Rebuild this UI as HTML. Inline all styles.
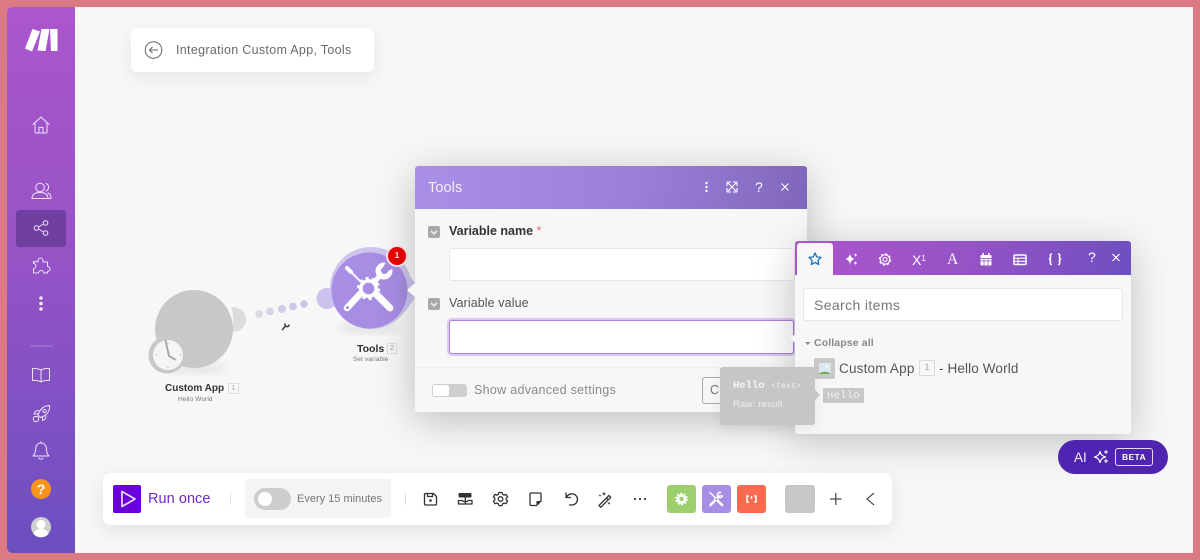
<!DOCTYPE html>
<html><head><meta charset="utf-8"><style>
html,body{margin:0;padding:0}
body{width:1200px;height:560px;overflow:hidden;background:#dc7a84;position:relative;font-family:"Liberation Sans",sans-serif}
.a,.t{position:absolute}
.t{white-space:nowrap}
svg{position:absolute;overflow:visible}
.i{fill:none;stroke:#efe2f8;stroke-width:1;stroke-linecap:round;stroke-linejoin:round}
.b{fill:none;stroke:#333;stroke-width:1.3;stroke-linecap:round;stroke-linejoin:round}
.w{fill:none;stroke:#fff;stroke-width:1.4;stroke-linecap:round;stroke-linejoin:round}
</style></head><body>
<div class="a" style="left:7px;top:7px;width:1186px;height:546px;background:#f7f7f7;border-radius:5px 0 0 5px;overflow:hidden">
<div class="a" style="left:0;top:0;width:68px;height:546px;background:linear-gradient(180deg,#ab56cc 0%,#9653c6 45%,#6c4fc0 100%)"></div>
</div>
<svg style="left:0;top:0" width="1200" height="560">
<g fill="#fff"><polygon points="32.500,29 40,31.500 32,51.500 25,48.500"/><polygon points="41.500,29 49.500,29 45.500,51 37.500,50.500"/><polygon points="50,29 57.500,29 57.500,51 51,51"/></g>
<path class="i" d="M33 124.500l8-7.500 8 7.500M35 122.500v9.500a1 1 0 0 0 1 1h10a1 1 0 0 0 1-1v-9.500M39 133v-5.500h4v5.500"/>
<circle class="i" cx="40" cy="187.500" r="4.300"/><path class="i" d="M32 198.500c0-4 3-6 8-6s8 2 8 6zM46 183.500a4 4 0 0 1 0 7.500M48 193c2 .8 3.200 2.800 3 5.500h-3"/>
<rect x="16" y="210" width="50" height="37" rx="3.500" fill="#6f3f9f"/>
<circle class="i" cx="36.500" cy="228" r="2.300"/><circle class="i" cx="45.500" cy="223" r="2.300"/><circle class="i" cx="45.500" cy="233" r="2.300"/><path class="i" d="M38.500 227l5-3M38.500 229l5 3"/>
<path class="i" d="M38 262v-1.500a2.500 2.500 0 0 1 5 0v1.500h4.500v4.500a2.500 2.500 0 0 1 0 5v1.500h-4a2.500 2.500 0 0 0-5 0h-5v-4.500a2.500 2.500 0 0 0 0-5v-2z"/>
<g fill="#f3e6fb"><circle cx="41" cy="298" r="1.800"/><circle cx="41" cy="303.500" r="1.800"/><circle cx="41" cy="309" r="1.800"/></g>
<rect x="30" y="345.500" width="23" height="1" fill="#a97fd6"/>
<path class="i" d="M41 370c-3-1.500-6-1.800-8.500-1.500v12c3-.3 6 0 8.500 1.500 2.500-1.500 5.500-1.800 8.500-1.500v-12c-2.500-.3-5.500 0-8.500 1.500zM41 370v12"/>
<path class="i" d="M49.500 405.500c-5 0-9.500 3-11.500 9.500l2.500 2.500c6.500-2 9.500-6.500 9-12zM38.500 410.500c-2.500 0-4 1.500-4.500 3.500h3.500M42.500 417v3.500c2 -.5 3.500-2 3.500-4.500"/><circle class="i" cx="44.500" cy="411" r="1.600"/><rect class="i" x="33.500" y="416.500" width="5" height="5" rx="1.800"/>
<path class="i" d="M41 443c-3.500 0-5.500 3-5.500 6.500 0 3-1 5-2.500 6.500h16c-1.500-1.500-2.500-3.500-2.500-6.500 0-3.500-2-6.500-5.500-6.500zM39 458c.5 1.500 3.500 1.500 4 0M41 441.500v1.500"/>
<circle cx="41" cy="489" r="10" fill="#f7941d"/>
<circle cx="41" cy="527" r="10" fill="#d0d0d0"/><circle cx="41" cy="524.500" r="4.500" fill="#fff"/><path d="M33.500 534c1-3.500 4-5 7.500-5s6.500 1.500 7.500 5a10 10 0 0 1-15 0z" fill="#fff"/>
</svg>
<div class="t" style="left:34px;top:480px;width:14px;text-align:center;font:bold 14px/18px 'Liberation Sans',sans-serif;color:#fff">?</div>

<!-- breadcrumb -->
<div class="a" style="left:131px;top:28px;width:243px;height:44px;background:#fff;border-radius:6px;box-shadow:0 6px 18px rgba(0,0,0,.07)"></div>
<svg style="left:0;top:0" width="1200" height="560"><circle cx="153.500" cy="50" r="8.300" fill="none" stroke="#666" stroke-width="1"/><path d="M158 50h-8.500M152.500 47l-3 3 3 3" fill="none" stroke="#666" stroke-width="1"/></svg>
<div class="t" style="left:176px;top:42px;font-size:12.500px;line-height:16px;color:#6a6a6a;letter-spacing:.31px">Integration Custom App, Tools</div>

<!-- nodes -->
<svg style="left:0;top:0" width="1200" height="560">
<defs><filter id="bl"><feGaussianBlur stdDeviation="5"/></filter></defs>
<ellipse cx="198" cy="368" rx="30" ry="6" fill="#000" opacity=".07" filter="url(#bl)"/>
<ellipse cx="369" cy="328" rx="32" ry="6" fill="#000" opacity=".08" filter="url(#bl)"/>
<path d="M231 307c9 0 15 5 15 12.500s-6 12.500-15 12.500c3-8 3-17 0-25z" fill="#dcdcdc"/>
<circle cx="194" cy="329" r="39" fill="#c8c8c8"/>
<circle cx="167" cy="355" r="18.500" fill="#c8c8c8"/>
<circle cx="168" cy="355" r="15" fill="#f5f5f5"/>
<path d="M165.500 340.500l3.500 15.500 6 3.500" fill="none" stroke="#a4a4a4" stroke-width="1.800" stroke-linecap="round" stroke-linejoin="round"/>
<g fill="#bbb"><circle cx="156.500" cy="355" r=".7"/><circle cx="180.500" cy="355" r=".7"/><circle cx="168" cy="367" r=".8"/><circle cx="168" cy="343" r=".7"/></g>
<circle cx="259" cy="314" r="3.700" fill="#dad8e2"/><circle cx="270" cy="311.500" r="3.900" fill="#d7d3e6"/><circle cx="282" cy="309" r="4.100" fill="#d2cce8"/><circle cx="293" cy="306.500" r="3.900" fill="#cfc7ea"/><circle cx="304" cy="304" r="3.700" fill="#ccc3ec"/>
<path d="M282 330l4-4.500M285 323.500c-.5 2 .8 3.500 3 3l1.500-1.800" fill="none" stroke="#444" stroke-width="1.600"/>
<circle cx="327" cy="298.500" r="10.500" fill="#ccc2ed"/>
<circle cx="371" cy="288" r="41" fill="#cdc3ee"/>
<polygon points="405,270 416,284 416,296 405,312" fill="#cdc3ee"/>
<circle cx="369.500" cy="290.500" r="38" fill="#a78de3"/>
<g stroke="#fff" stroke-linecap="round" fill="none">
<path d="M347 268l4 4" stroke-width="4"/>
<path d="M350 271l10 10" stroke-width="1.800"/>
<path d="M360 294l-13 14" stroke-width="6.500"/>
<path d="M377 295l13 13" stroke-width="7"/>
<path d="M374 282l7-7" stroke-width="5"/>
</g>
<circle cx="347.500" cy="307.500" r="1.500" fill="#a78de3"/>
<circle cx="384" cy="271" r="8.500" fill="#fff"/>
<circle cx="384.500" cy="270.500" r="3.500" fill="#a78de3"/>
<polygon points="382.500,268.500 386.500,272.500 396,266 388,258" fill="#a78de3"/>
<circle cx="368.500" cy="288.500" r="7.700" fill="#a78de3" stroke="#fff" stroke-width="3.600"/>
<circle cx="368.500" cy="288.500" r="10.300" fill="none" stroke="#fff" stroke-width="2.600" stroke-dasharray="3.100 3.370"/>
<circle cx="397" cy="256" r="11" fill="#f7e9ee"/><circle cx="397" cy="256" r="9" fill="#ee0000"/>
</svg>
<div class="t" style="left:397px;top:250px;width:0;display:flex;justify-content:center;font:bold 8px/12px 'Liberation Sans',sans-serif;color:#fff">1</div>
<div class="t" style="left:165px;top:382px;font:bold 10px/14px 'Liberation Sans',sans-serif;color:#333">Custom App</div>
<div class="a" style="left:228px;top:383px;width:9px;height:9px;border:1px solid #ddd;font:7px/9px 'Liberation Sans',sans-serif;color:#aaa;text-align:center">1</div>
<div class="t" style="left:178px;top:395px;font-size:6.500px;line-height:10px;color:#777;letter-spacing:.1px">Hello World</div>
<div class="t" style="left:357px;top:342px;font:bold 10.500px/14px 'Liberation Sans',sans-serif;color:#333">Tools</div>
<div class="a" style="left:387px;top:343px;width:8px;height:9px;border:1px solid #ddd;font:7px/9px 'Liberation Sans',sans-serif;color:#999;text-align:center">2</div>
<div class="t" style="left:353px;top:355px;font-size:6.500px;line-height:10px;color:#777;letter-spacing:.1px">Set variable</div>

<!-- dialog -->
<div class="a" style="left:415px;top:166px;width:392px;height:246px;background:#f7f7f7;border-radius:3px;box-shadow:0 8px 40px rgba(0,0,0,.24);overflow:hidden">
<div class="a" style="left:0;top:0;width:392px;height:43px;background:linear-gradient(100deg,#a98fe6 0%,#9a80d9 55%,#8066bb 100%)"></div>
<div class="a" style="left:0;top:201px;width:392px;height:1px;background:#efefef"></div>
</div>
<div class="t" style="left:428px;top:179px;font-size:14.500px;line-height:18px;color:#f3eefc;letter-spacing:.1px">Tools</div>
<svg style="left:0;top:0" width="1200" height="560">
<polygon points="407,290 416,282 416,298" fill="#f7f7f7"/>
<g fill="#fff"><circle cx="706.500" cy="183" r="1.200"/><circle cx="706.500" cy="187" r="1.200"/><circle cx="706.500" cy="191" r="1.200"/></g>
<path d="M727 182h4M727 182v4M737 182h-4M737 182v4M727 192h4M727 192v-4M737 192h-4M737 192v-4M728 183l8 8M736 183l-8 8" fill="none" stroke="#fff" stroke-width="1.100"/>
<path d="M781.500 183.500l7 7M788.500 183.500l-7 7" fill="none" stroke="#fff" stroke-width="1.100"/>
<rect x="428" y="226" width="12" height="12" rx="2" fill="#a9a9a9"/><path d="M431 231l3 2.800 3-2.800" fill="none" stroke="#fff" stroke-width="1.200"/>
<rect x="428" y="298" width="12" height="12" rx="2" fill="#a9a9a9"/><path d="M431 303l3 2.800 3-2.800" fill="none" stroke="#fff" stroke-width="1.200"/>
</svg>
<div class="t" style="left:755px;top:178px;font-size:14px;line-height:18px;color:#fff">?</div>
<div class="t" style="left:449px;top:224px;font:bold 12.500px/15px 'Liberation Sans',sans-serif;color:#333">Variable name<span style="color:#e56a7c;font-weight:400"> *</span></div>
<div class="a" style="left:449px;top:248px;width:344px;height:31px;background:#fff;border:1px solid #e6e6e6;border-radius:3px"></div>
<div class="t" style="left:449px;top:296px;font-size:12.500px;line-height:15px;color:#555;letter-spacing:.1px">Variable value</div>
<div class="a" style="left:449px;top:320px;width:343px;height:32px;background:#fff;border:1px solid #a985dc;border-radius:3px;box-shadow:0 0 0 2px #dcc8f0"></div>
<div class="a" style="left:432px;top:384px;width:35px;height:13px;background:#cfcfcf;border-radius:3px"></div>
<div class="a" style="left:433px;top:385px;width:16px;height:11px;background:#fff;border-radius:2px"></div>
<div class="t" style="left:474px;top:382px;font-size:12.500px;line-height:16px;color:#8a8a8a;letter-spacing:.3px">Show advanced settings</div>
<div class="a" style="left:702px;top:377px;width:40px;height:25px;border:1px solid #aaa;border-radius:3px"></div>
<div class="t" style="left:710px;top:382px;font-size:12.500px;line-height:16px;color:#777">C</div>

<!-- right panel -->
<div class="a" style="left:795px;top:241px;width:336px;height:193px;background:#f7f7f7;border-radius:3px;box-shadow:0 8px 40px rgba(0,0,0,.22);overflow:hidden">
<div class="a" style="left:0;top:0;width:336px;height:34px;background:linear-gradient(100deg,#ad55cc 0%,#9653c6 50%,#6e4fc0 100%)"></div>
<div class="a" style="left:2px;top:2px;width:36px;height:32px;background:#f7f7f7;border-radius:3px 3px 0 0"></div>
</div>
<div class="a" style="left:803px;top:288px;width:318px;height:31px;background:#fff;border:1px solid #e6e6e6;border-radius:3px"></div>
<div class="t" style="left:814px;top:296px;font-size:14px;line-height:18px;color:#777;letter-spacing:.38px">Search items</div>
<div class="t" style="left:814px;top:336px;font:bold 10.500px/14px 'Liberation Sans',sans-serif;color:#888;letter-spacing:.12px">Collapse all</div>
<div class="a" style="left:814px;top:358px;width:21px;height:21px;background:#c9c9c9;border-radius:2px"></div>
<svg style="left:0;top:0" width="1200" height="560">
<polygon points="805,342 810.500,342 807.800,345" fill="#888"/>
<rect x="819" y="363" width="12" height="11" fill="#dbe9f0"/><path d="M819 374c2-3 9-3 12 0z" fill="#6fae54"/><circle cx="827" cy="366" r="1.300" fill="#fff"/>
<path d="M815 253l1.800 3.900 4.200.5-3.100 2.900.8 4.200-3.700-2.100-3.700 2.100.8-4.200-3.100-2.900 4.200-.5z" fill="none" stroke="#1f6fb8" stroke-width="1.300" stroke-linejoin="round"/>
<path d="M850 253.500c.6 3.200 1.900 4.800 5 5.500-3.100.7-4.400 2.300-5 5.500-.6-3.200-1.900-4.800-5-5.500 3.100-.7 4.400-2.300 5-5.500zM855.500 253c.3 1.300.8 1.800 2 2-1.200.3-1.700.8-2 2-.3-1.200-.8-1.700-2-2 1.200-.2 1.700-.7 2-2zM855.500 261c.3 1.300.8 1.800 2 2-1.200.3-1.700.8-2 2-.3-1.200-.8-1.700-2-2 1.200-.2 1.700-.7 2-2z" fill="#fff"/>
<circle cx="885" cy="259.500" r="4.700" fill="none" stroke="#fff" stroke-width="1.100"/><circle cx="885" cy="259.500" r="5.500" fill="none" stroke="#fff" stroke-width="1.400" stroke-dasharray="2.200 2.120"/><circle cx="885" cy="259.500" r="2" fill="none" stroke="#fff" stroke-width="1.100"/>
<rect x="980.500" y="255" width="11" height="10.500" rx="1" fill="#fff"/><rect x="982.500" y="253" width="1.500" height="3" fill="#fff"/><rect x="988" y="253" width="1.500" height="3" fill="#fff"/><path d="M980.500 258.500h11M980.500 261h11M984 258v7.500M988 258v7.500" stroke="#8a52c4" stroke-width=".7"/>
<rect x="1014" y="255" width="12" height="9.500" rx="1" fill="none" stroke="#fff" stroke-width="1.500"/><path d="M1014 258.200h12M1014 261.300h12M1018 258v6" stroke="#fff" stroke-width="1.100"/>
<path d="M1052 254c-2.500 0-1.500 2-1.500 3.500 0 1-.6 1.500-1.500 1.700.9.200 1.500.7 1.500 1.700 0 1.500-1 3.600 1.500 3.600M1058 254c2.500 0 1.500 2 1.500 3.500 0 1 .6 1.500 1.500 1.700-.9.200-1.500.7-1.500 1.700 0 1.500 1 3.600-1.500 3.600" fill="none" stroke="#fff" stroke-width="1.500"/>
<path d="M1112.500 254l7 7M1119.500 254l-7 7" fill="none" stroke="#fff" stroke-width="1.200"/>
<polygon points="790,338 797,333 797,345" fill="#f7f7f7"/>
</svg>
<div class="t" style="left:912px;top:250px;font-size:14px;line-height:18px;color:#fff">X<span style="font-size:8px;vertical-align:4px">1</span></div>
<div class="t" style="left:947px;top:251px;font-family:'Liberation Serif',serif;font-size:15.500px;line-height:18px;color:#fff">A</div>
<div class="t" style="left:1088px;top:248px;font-size:14px;line-height:18px;color:#fff">?</div>
<div class="t" style="left:839px;top:360px;font-size:13.500px;line-height:17px;color:#555;letter-spacing:.2px">Custom App</div>
<div class="a" style="left:919px;top:360px;width:14px;height:14px;border:1px solid #ddd;font:9.500px/14px 'Liberation Sans',sans-serif;color:#aaa;text-align:center">1</div>
<div class="t" style="left:939px;top:360px;font-size:13.500px;line-height:17px;color:#555;letter-spacing:.13px">- Hello World</div>
<div class="a" style="left:823px;top:388px;width:41px;height:15px;background:#c8c8c8;border-radius:1px"></div>
<div class="t" style="left:827px;top:390px;font-family:'Liberation Mono',monospace;font-size:10.500px;line-height:13px;color:#f2f2f2;letter-spacing:.3px">Hello</div>

<!-- tooltip -->
<div class="a" style="left:720px;top:367px;width:95px;height:58px;background:#c6c6c6;border-radius:3px;box-shadow:0 4px 14px rgba(0,0,0,.08)"></div>
<svg style="left:0;top:0" width="1200" height="560"><polygon points="815,390 820,395 815,400" fill="#c6c6c6"/></svg>
<div class="t" style="left:733px;top:380px;font-family:'Liberation Mono',monospace;font-weight:bold;font-size:10.500px;line-height:13px;color:#f7f7f7">Hello</div>
<div class="t" style="left:771px;top:380px;font-family:'Liberation Mono',monospace;font-size:8px;line-height:13px;color:#f0f0f0;letter-spacing:.2px">&lt;text&gt;</div>
<div class="t" style="left:733px;top:398px;font-size:9.500px;line-height:13px;color:#efefef;letter-spacing:.2px">Raw: result</div>

<!-- AI -->
<div class="a" style="left:1058px;top:440px;width:110px;height:34px;background:#4f24b0;border-radius:17px"></div>
<div class="t" style="left:1074px;top:449px;font-size:13.500px;line-height:17px;color:#f3eefc">AI</div>
<div class="a" style="left:1115px;top:448px;width:36px;height:16px;border:1px solid #e3d9f5;border-radius:3px;font:bold 8.500px/16px 'Liberation Sans',sans-serif;color:#fff;text-align:center;letter-spacing:.4px">BETA</div>
<svg style="left:0;top:0" width="1200" height="560"><path d="M1100 451.500c.7 3 2 4.500 5.500 5.500-3.500 1-4.800 2.500-5.500 5.500-.7-3-2-4.500-5.500-5.500 3.500-1 4.800-2.500 5.500-5.500z" fill="none" stroke="#fff" stroke-width="1.200" stroke-linejoin="round"/><path d="M1106 450v4M1104 452h4M1106 459v4M1104 461h4" stroke="#fff" stroke-width="1"/></svg>

<!-- toolbar -->
<div class="a" style="left:103px;top:473px;width:789px;height:52px;background:#fff;border-radius:7px;box-shadow:0 6px 18px rgba(0,0,0,.09)"></div>
<div class="a" style="left:113px;top:485px;width:28px;height:28px;background:#6b00d7;border-radius:2px"></div>
<div class="t" style="left:148px;top:490px;font-size:14.500px;line-height:18px;color:#6d2bc9;letter-spacing:.05px">Run once</div>
<div class="a" style="left:230px;top:493px;width:1px;height:12px;background:#ddd"></div>
<div class="a" style="left:245px;top:479px;width:146px;height:39px;background:#f4f4f4;border-radius:3px"></div>
<div class="a" style="left:254px;top:488px;width:37px;height:22px;background:#cdcdcd;border-radius:11px"></div>
<div class="a" style="left:258px;top:492px;width:14px;height:14px;background:#fff;border-radius:50%"></div>
<div class="t" style="left:297px;top:492px;font-size:11px;line-height:15px;color:#777">Every 15 minutes</div>
<div class="a" style="left:405px;top:493px;width:1px;height:12px;background:#ddd"></div>
<div class="a" style="left:667px;top:485px;width:29px;height:28px;background:#9dcf6e;border-radius:3px"></div>
<div class="a" style="left:702px;top:485px;width:29px;height:28px;background:#a78de3;border-radius:3px"></div>
<div class="a" style="left:737px;top:485px;width:29px;height:28px;background:#f96a50;border-radius:3px"></div>
<div class="a" style="left:785px;top:485px;width:30px;height:28px;background:#c8c8c8;border-radius:3px"></div>
<svg style="left:0;top:0" width="1200" height="560">
<polygon points="122,491.500 135,499 122,506.500" fill="none" stroke="#e8dcf8" stroke-width="1.700" stroke-linejoin="round"/>
<path class="b" d="M425.500 493.500h8l3 3v7.500a1 1 0 0 1-1 1h-10a1 1 0 0 1-1-1v-9.500a1 1 0 0 1 1-1zM427.500 493.500v3h5v-3"/><circle cx="430.500" cy="500.500" r="1.300" fill="#333"/>
<rect x="458.500" y="493" width="13" height="4.500" rx="1" fill="#333"/><path class="b" d="M458.500 500.500h4M472 500.500h-4M465.300 497.500v6M463 501.500h4.500M458.500 500.500v3.500h13.500v-3.500" stroke-width="1.400"/>
<circle class="b" cx="500.500" cy="499" r="2.300"/><path class="b" d="M499 492.500h3l.6 1.800 1.700.8 1.800-.7 1.500 2.600-1.400 1.200v1.700l1.400 1.200-1.500 2.600-1.800-.7-1.700.8-.6 1.800h-3l-.6-1.800-1.700-.8-1.800.7-1.500-2.600 1.400-1.200v-1.700l-1.400-1.200 1.500-2.600 1.800.7 1.700-.8z"/>
<path class="b" d="M531 493h9a1 1 0 0 1 1 1v7l-4.500 4.500H531a1 1 0 0 1-1-1V494a1 1 0 0 1 1-1z"/><path d="M541 501h-4.500v4.500z" fill="#333"/>
<path class="b" d="M566 493v4.500h4.500M566.300 497.500c1.500-2.800 4-4 6.500-3.600 3 .6 4.700 3 4.700 5.300 0 3.200-2.500 5.800-5.700 5.800h-2.300"/>
<path class="b" d="M599 505.500l10-10 1.800 1.800-10 10zM606.500 498l1.800 1.800"/><path d="M604 491.500c.3 1.500.8 2 2.200 2.300-1.400.3-1.900.8-2.200 2.300-.3-1.500-.8-2-2.200-2.300 1.400-.3 1.900-.8 2.200-2.300zM600 494c.2 1 .5 1.300 1.500 1.500-1 .2-1.300.5-1.500 1.500-.2-1-.5-1.300-1.500-1.500 1-.2 1.300-.5 1.500-1.500zM609 501.500c.2 1.200.6 1.600 1.800 1.800-1.200.2-1.600.6-1.800 1.800-.2-1.200-.6-1.600-1.800-1.800 1.200-.2 1.600-.6 1.800-1.800z" fill="#333"/>
<g fill="#333"><circle cx="635" cy="499" r="1.100"/><circle cx="640" cy="499" r="1.100"/><circle cx="645" cy="499" r="1.100"/></g>
<circle cx="681.500" cy="499" r="3.500" fill="none" stroke="#fff" stroke-width="2.500"/><circle cx="681.500" cy="499" r="5.500" fill="none" stroke="#fff" stroke-width="1.500" stroke-dasharray="2 1.500"/>
<g fill="none" stroke="#fff" stroke-linecap="round"><path d="M710 492.500l5 5" stroke-width="1.400"/><path d="M710.500 505l4.500-4.500" stroke-width="2.600"/><path d="M718 501l4 4" stroke-width="2.600"/><path d="M718 497.500l2-2" stroke-width="1.800"/><path d="M720.500 492.500a2.600 2.600 0 1 0 2 3" stroke-width="1.500"/><circle cx="716.300" cy="499" r="1.700" stroke-width="1.200"/></g>
<path d="M749 496h-2v6h2M754 496h2v6h-2M751.500 496v3" fill="none" stroke="#fff" stroke-width="1.500"/>
<path d="M830 499h11.500M835.800 493v12" stroke="#444" stroke-width="1.200"/>
<path d="M874 493l-7 6 7 6" fill="none" stroke="#333" stroke-width="1.100"/>
</svg>
</body></html>
